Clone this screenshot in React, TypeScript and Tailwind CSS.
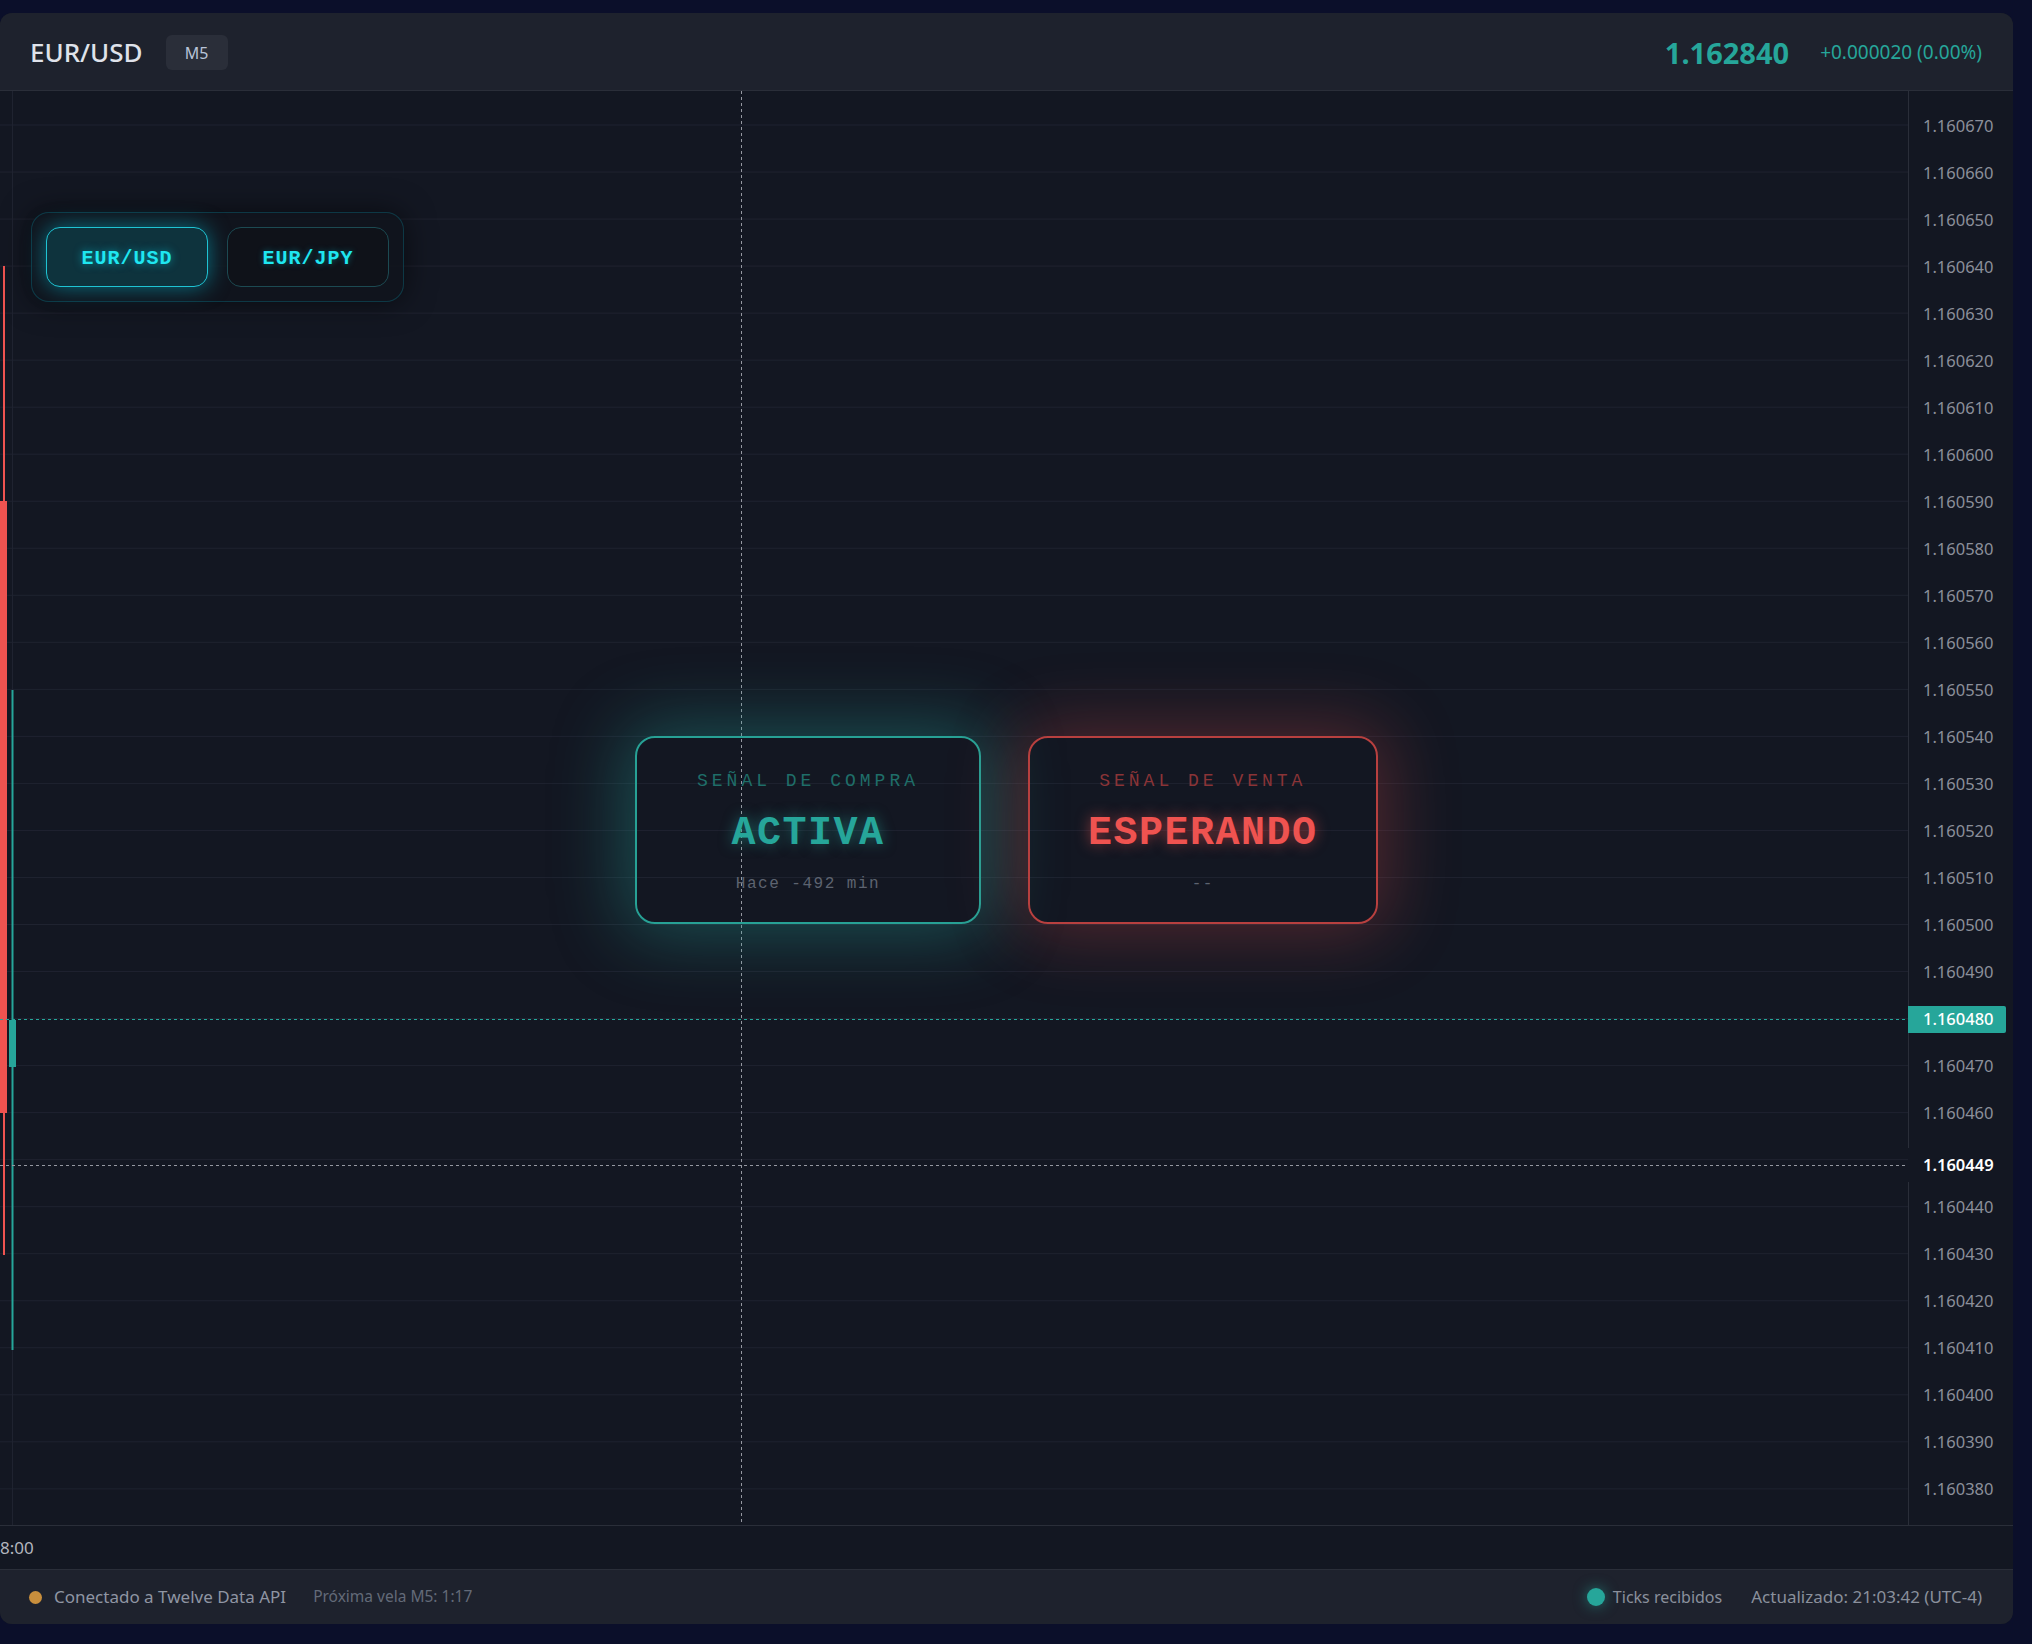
import React from "react";

const TOP = 34;
const STEP = 47.03;
const PLOT_W = 1908;
const PLOT_H = 1434;

const levels = Array.from({ length: 30 }, (_, i) => ({
  i,
  value: (1.16067 - i * 0.00001).toFixed(6),
  y: TOP + STEP * i,
}));

function Chart() {
  return (
    <svg width={PLOT_W} height={PLOT_H} className="absolute left-0 top-0">
      {/* grid */}
      {levels.map((l) => (
        <line key={l.i} x1={0} x2={PLOT_W} y1={l.y} y2={l.y} stroke="#1f2330" strokeWidth={1} />
      ))}
      <line x1={12.5} x2={12.5} y1={0} y2={PLOT_H} stroke="#1f2330" strokeWidth={1} />

      {/* candles */}
      <rect x={3} y={175} width={2} height={989} fill="#ef5350" />
      <rect x={0} y={410} width={7} height={612} fill="#ef5350" />
      <rect x={11.5} y={599} width={2} height={660} fill="#26a69a" />
      <rect x={9} y={929} width={7} height={47} fill="#26a69a" />

      {/* last price line */}
      <line x1={0} x2={PLOT_W} y1={928.5} y2={928.5} stroke="#26a69a" strokeWidth={1} strokeDasharray="3 3" />

      {/* crosshair */}
      <line x1={0} x2={PLOT_W} y1={1074.5} y2={1074.5} stroke="#9598a1" strokeWidth={1} strokeDasharray="3 3" />
      <line x1={741.5} x2={741.5} y1={0} y2={PLOT_H} stroke="#9598a1" strokeWidth={1} strokeDasharray="3 3" />
    </svg>
  );
}

function PriceAxis() {
  return (
    <div className="relative w-[105px] border-l border-[#2a2e39] bg-[#131722] font-['Noto_Sans',sans-serif]">
      {levels
        .filter((l) => l.i !== 19 && l.i !== 22)
        .map((l) => (
          <div
            key={l.i}
            className="absolute left-[14px] h-[24px] text-[16.5px] leading-[24px] text-[#8b8f9a]"
            style={{ top: l.y - 11.5 }}
          >
            {l.value}
          </div>
        ))}
      <div className="absolute left-[-1px] top-[915px] flex h-[27px] w-[98px] items-center rounded-r-[2px] bg-[#26a69a] pl-[15px] text-[16.5px] font-medium text-white">
        1.160480
      </div>
      <div className="absolute left-[-1px] top-[1057px] flex h-[34px] w-[100px] items-center bg-[#131722] pl-[15px] text-[16.5px] font-semibold text-white">
        1.160449
      </div>
    </div>
  );
}

const mono = "font-['Courier_New','Courier','Nimbus_Mono_PS','FreeMono','Liberation_Mono',monospace]";

function PairSelector() {
  return (
    <div className="absolute left-[31px] top-[121px] flex gap-[19px] rounded-[18px] border border-[rgba(0,229,255,0.18)] bg-[rgba(16,20,28,0.85)] p-[14px] shadow-[0_0_30px_rgba(0,0,0,0.55)]">
      <button
        className={`h-[60px] w-[162px] rounded-[14px] border border-[#1fc3d3] bg-[#0e333d] pt-[3px] ${mono} text-[20px] font-bold tracking-[1px] text-[#1fe6f0] shadow-[0_0_22px_rgba(0,210,235,0.5)] [text-shadow:0_0_8px_rgba(0,229,255,0.55)]`}
      >
        EUR/USD
      </button>
      <button
        className={`h-[60px] w-[162px] rounded-[14px] border border-[#1c4a52] bg-[#0f1219] pt-[3px] ${mono} text-[20px] font-bold tracking-[1px] text-[#1fe6f0] [text-shadow:0_0_6px_rgba(0,229,255,0.35)]`}
      >
        EUR/JPY
      </button>
    </div>
  );
}

function SignalCards() {
  return (
    <div className={`absolute left-[635px] top-[645px] flex gap-[47px] ${mono}`}>
      <div className="flex h-[188px] flex-col items-center rounded-[20px] border-2 border-[#27a195] px-[60px] pt-[32px] shadow-[0_0_70px_12px_rgba(38,166,154,0.38)]">
        <div className="text-[18px] leading-[22px] tracking-[4px] text-[#1f6e69]">SEÑAL DE COMPRA</div>
        <div className="mt-[20px] text-[40px] font-bold leading-[44px] tracking-[1.5px] text-[#26a69a] [text-shadow:0_0_14px_rgba(38,166,154,0.55)]">
          ACTIVA
        </div>
        <div className="mt-[18px] text-[16px] leading-[20px] tracking-[1.5px] text-[#5d6370]">Hace -492 min</div>
      </div>
      <div className="flex h-[188px] flex-col items-center rounded-[20px] border-2 border-[#b8403f] px-[58px] pt-[32px] shadow-[0_0_70px_10px_rgba(239,83,80,0.28)]">
        <div className="text-[18px] leading-[22px] tracking-[4px] text-[#8a3437]">SEÑAL DE VENTA</div>
        <div className="mt-[20px] text-[40px] font-bold leading-[44px] tracking-[1.5px] text-[#ef5350] [text-shadow:0_0_14px_rgba(239,83,80,0.55)]">
          ESPERANDO
        </div>
        <div className="mt-[18px] text-[16px] leading-[20px] tracking-[1.5px] text-[#5d6370]">--</div>
      </div>
    </div>
  );
}

export default function App() {
  return (
    <div className="h-[1644px] w-[2032px] bg-[#0b0f2a] pt-[13px] font-['Noto_Sans',sans-serif]">
      <div className="flex h-[1611px] w-[2013px] flex-col overflow-hidden rounded-[12px] bg-[#131722]">
        {/* header */}
        <div className="flex h-[78px] shrink-0 items-center justify-between border-b border-[#2a2e39] bg-[#1e222d] pl-[30px] pr-[31px] pt-[2px]">
          <div className="flex items-center gap-[23px]">
            <span className="text-[26px] font-medium text-[#dfe2ea]">EUR/USD</span>
            <span className="flex h-[35px] w-[62px] items-center justify-center rounded-[6px] bg-[#2a2e39] text-[16px] text-[#b8c4d8]">
              M5
            </span>
          </div>
          <div className="flex items-center gap-[31px]">
            <span className="text-[29px] font-bold text-[#26a69a]">1.162840</span>
            <span className="text-[19px] text-[#26a69a]">+0.000020 (0.00%)</span>
          </div>
        </div>

        {/* chart */}
        <div className="flex h-[1434px] shrink-0">
          <div className="relative w-[1908px] overflow-hidden">
            <Chart />
            <PairSelector />
            <SignalCards />
          </div>
          <PriceAxis />
        </div>

        {/* time axis */}
        <div className="flex h-[44px] shrink-0 items-center border-t border-[#2a2e39] text-[17px] text-[#b2b5be]">
          8:00
        </div>

        {/* footer */}
        <div className="flex h-[55px] shrink-0 items-center justify-between border-t border-[#2a2e39] bg-[#1e222d] pl-[29px] pr-[31px]">
          <div className="flex items-center">
            <span className="h-[13px] w-[13px] rounded-full bg-[#c98f3d]" />
            <span className="ml-[12px] text-[17px] text-[#8f95a3]">Conectado a Twelve Data API</span>
            <span className="ml-[27px] text-[15.5px] text-[#636a78]">Próxima vela M5: 1:17</span>
          </div>
          <div className="flex items-center">
            <span className="h-[18px] w-[18px] rounded-full bg-[#26a69a] shadow-[0_0_14px_rgba(38,166,154,0.6)]" />
            <span className="ml-[8px] text-[16px] text-[#8a909c]">Ticks recibidos</span>
            <span className="ml-[29px] text-[17px] text-[#8a909c]">Actualizado: 21:03:42 (UTC-4)</span>
          </div>
        </div>
      </div>
    </div>
  );
}
